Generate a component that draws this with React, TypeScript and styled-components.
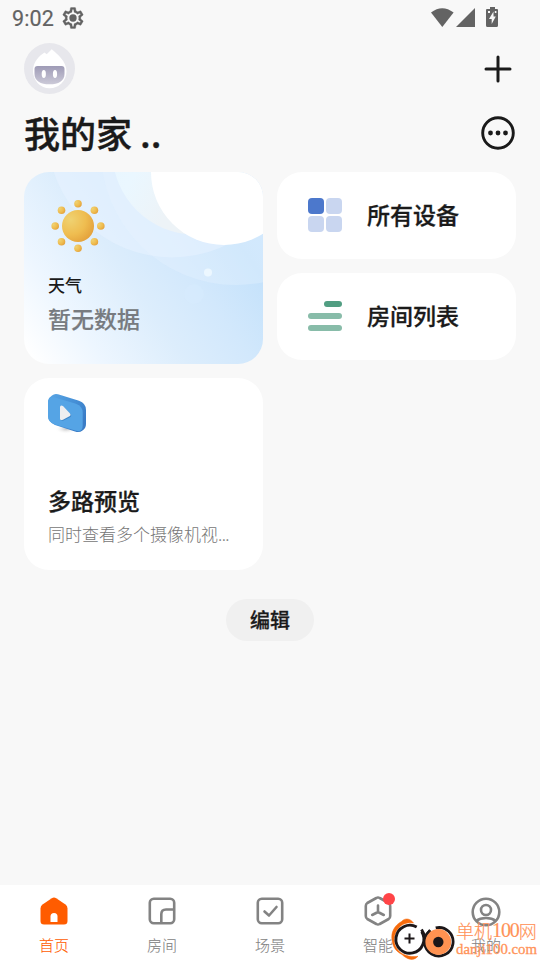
import React from 'react';
import styled, { createGlobalStyle } from 'styled-components';

const GlobalStyle = createGlobalStyle`
  * { box-sizing: border-box; }
  html, body { margin: 0; padding: 0; background: #f8f8f8; }
  body { font-family: Roboto, "Noto Sans CJK SC", sans-serif; color: #1a1a1a; overflow: hidden; }
  svg { display: block; flex: none; }
`;

const Screen = styled.div`
  width: 540px;
  height: 960px;
  display: flex;
  flex-direction: column;
  background: #f8f8f8;
  overflow: hidden;
`;

const StatusBar = styled.header`
  height: 36px;
  flex: none;
  padding: 0 41px 0 12px;
  display: flex;
  align-items: center;
  justify-content: space-between;
  color: #636363;
`;

const StatusGroup = styled.div<{ $gap: number }>`
  display: flex;
  align-items: center;
  gap: ${p => p.$gap}px;
`;

const Clock = styled.span`
  font-size: 21.5px;
  line-height: 36px;
  letter-spacing: 0.15px;
  padding-top: 1px;
  height: 36px;
  -webkit-text-stroke: 0.2px;
`;

const TopRow = styled.div`
  height: 65px;
  flex: none;
  display: flex;
  align-items: center;
  justify-content: space-between;
  padding: 0 28px 0 24px;
`;

const TitleRow = styled.div`
  height: 63px;
  flex: none;
  display: flex;
  align-items: center;
  justify-content: space-between;
  padding: 1px 25px 0 24px;
`;

const Title = styled.h1`
  margin: 0;
  padding-bottom: 3px;
  font: 500 36px/58px "Noto Sans CJK SC", sans-serif;
  -webkit-text-stroke: 0.4px;
`;

const Content = styled.main`
  flex: 1;
  display: flex;
  flex-direction: column;
  align-items: center;
  padding: 8px 24px 0;
`;

const Grid = styled.div`
  width: 100%;
  display: grid;
  grid-template-columns: 239px 239px;
  grid-template-rows: 192px 192px;
  gap: 14px;
`;

const Column = styled.div`
  display: flex;
  flex-direction: column;
  gap: 14px;
`;

const Card = styled.section`
  border-radius: 25px;
  background: #fff;
  overflow: hidden;
`;

const WeatherCard = styled(Card)`
  position: relative;
  background: linear-gradient(55deg, #ffffff 3%, #edf6ff 22%, #dcedfc 44%, #d2e8fc 62%, #c5e2fb 80%, #cbe4fe 100%);
`;

const Backdrop = styled.svg`
  position: absolute;
  inset: 0;
`;

const CardBody = styled.div<{ $top: number }>`
  position: relative;
  display: flex;
  flex-direction: column;
  align-items: flex-start;
  padding: ${p => p.$top}px 24px 0;
`;

const SunSlot = styled.div`
  margin-left: 3px;
`;

const WeatherLabel = styled.div`
  margin-top: 20px;
  font: 500 17px/24px "Noto Sans CJK SC", sans-serif;
`;

const CardTitle = styled.div<{ $muted?: boolean; $top?: number }>`
  font: 500 23px/34px "Noto Sans CJK SC", sans-serif;
  -webkit-text-stroke: ${p => (p.$muted ? 0.15 : 0.3)}px;
  margin-top: ${p => p.$top ?? 0}px;
  color: ${p => (p.$muted ? '#777b80' : '#1a1a1a')};
`;

const Description = styled.div`
  width: 182px;
  margin-top: 4px;
  font: 300 17px/26px "Noto Sans CJK SC", sans-serif;
  color: #767676;
  white-space: nowrap;
`;

const Ellipsis = styled.span`
  letter-spacing: -0.6px;
`;

const ShortcutCard = styled(Card)`
  height: 87px;
  display: flex;
  align-items: center;
  gap: 25px;
  padding: 0 0 2px 31px;
`;

const ShortcutLabel = styled(CardTitle)`
  padding-bottom: 2px;
`;

const EditButton = styled.button`
  margin-top: 29px;
  width: 88px;
  height: 42px;
  padding: 0;
  border: 0;
  border-radius: 21px;
  background: #f0f0f0;
  color: #1a1a1a;
  font: 500 20px/40px "Noto Sans CJK SC", sans-serif;
  -webkit-text-stroke: 0.3px;
`;

const NavBar = styled.nav`
  position: relative;
  height: 75px;
  flex: none;
  display: grid;
  grid-template-columns: repeat(5, 1fr);
  background: #fff;
`;

const NavItem = styled.div<{ $active?: boolean }>`
  position: relative;
  display: flex;
  flex-direction: column;
  align-items: center;
  padding-top: 10px;
  color: ${p => (p.$active ? '#ff5c00' : '#838383')};
`;

const NavLabel = styled.span`
  margin-top: 7px;
  font: 300 15px/22px "Noto Sans CJK SC", sans-serif;
  -webkit-text-stroke: 0.1px;
`;

const Dot = styled.i`
  position: absolute;
  left: 59px;
  top: 8px;
  width: 12px;
  height: 12px;
  border-radius: 50%;
  background: #ff4447;
`;

const Watermark = styled.div`
  position: absolute;
  right: 0;
  bottom: 0;
  width: 152px;
  height: 44px;
  display: flex;
  color: #ff9358;
`;

const WatermarkText = styled.div`
  display: flex;
  flex-direction: column;
  margin-left: 1px;
  white-space: nowrap;
`;

const SiteName = styled.span`
  display: flex;
  height: 25px;
  font: 300 18px/29px "Noto Sans CJK SC", serif;
  -webkit-text-stroke: 0.15px;
`;

const SiteNumber = styled.span`
  font: 400 20px/29px "Liberation Serif", serif;
  letter-spacing: -1.1px;
`;

const SiteUrl = styled.span`
  font: 400 14.8px/16px "Liberation Serif", serif;
  height: 16px;
  -webkit-text-stroke: 0.3px;
`;

const GearIcon = () => (
  <svg width="22" height="22" viewBox="1.500 1.500 21 21" fill="currentColor">
    <path d="M19.43 12.98c.04-.32.07-.64.07-.98s-.03-.66-.07-.98l2.11-1.65a.5.5 0 0 0 .12-.64l-2-3.46a.5.5 0 0 0-.61-.22l-2.49 1a7.3 7.3 0 0 0-1.69-.98l-.38-2.65A.49.49 0 0 0 14 2h-4a.49.49 0 0 0-.49.42l-.38 2.65c-.61.25-1.17.59-1.69.98l-2.49-1a.5.5 0 0 0-.61.22l-2 3.46a.49.49 0 0 0 .12.64l2.11 1.65c-.04.32-.07.65-.07.98s.03.66.07.98l-2.11 1.65a.5.5 0 0 0-.12.64l2 3.46c.12.22.39.3.61.22l2.49-1c.52.4 1.08.73 1.69.98l.38 2.65c.03.24.24.42.49.42h4c.25 0 .46-.18.49-.42l.38-2.65a7.7 7.7 0 0 0 1.69-.98l2.49 1c.23.09.49 0 .61-.22l2-3.46a.5.5 0 0 0-.12-.64zm-1.98-1.71c.04.31.05.52.05.73s-.02.43-.05.73l-.14 1.13.89.7 1.08.84-.7 1.21-1.27-.51-1.04-.42-.9.68c-.43.32-.84.56-1.25.73l-1.06.43-.16 1.13-.2 1.35h-1.400l-.19-1.350-.16-1.130-1.060-.43c-.43-.18-.83-.41-1.230-.71l-.91-.7-1.060.43-1.270.51-.7-1.210 1.080-.84.89-.7-.14-1.130A8 8 0 0 1 6.500 12c0-.2.020-.43.050-.73l.14-1.130-.89-.7-1.080-.84.7-1.210 1.270.51 1.040.42.9-.68c.43-.32.84-.56 1.250-.73l1.060-.43.16-1.130.2-1.350h1.390l.19 1.350.16 1.130 1.060.43c.43.18.83.41 1.230.71l.91.7 1.060-.43 1.270-.51.7 1.210-1.070.85-.89.7z" stroke="currentColor" strokeWidth=".3" />
    <circle cx="12" cy="12" r="3.500" />
  </svg>
);

const SignalIcons = () => (
  <svg width="68" height="22" viewBox="0 0 68 22" fill="#636363">
    <path d="M0 5.500Q11.200-3 22.600 5.500L11.300 20z" />
    <path d="M44 1V20H25z" />
    <path fillRule="evenodd" d="M59 0h5v2h2q1 0 1 1v15.500q0 1.500-1.500 1.500h-9Q55 20 55 18.500V3q0-1 1-1h3zM62.500 4.500 58 12h2.700v5L64.800 9.500h-2.300zM57 4v2h2V4zM63.800 4v2h1.600V4z" />
  </svg>
);

const Avatar = () => (
  <svg width="51" height="51" viewBox="0 0 51 51">
    <defs>
      <linearGradient id="mask" x1="0" y1="0" x2="0" y2="1">
        <stop offset="0" stopColor="#9e9bb6" />
        <stop offset="1" stopColor="#cccad8" />
      </linearGradient>
    </defs>
    <circle cx="25.500" cy="25.500" r="25.500" fill="#e7e7ec" />
    <path d="M9 28C9 19 15 13 20.500 9.500l2.200 1.700 5-4.900C33 11 42.500 18 42.500 28.500A16.700 17 0 0 1 9 28z" fill="#fff" />
    <path d="M13.500 23h24q3 0 3 3v5c0 7-6 10.300-15 10.300s-15-3.300-15-10.300v-5q0-3 3-3z" fill="url(#mask)" />
    <ellipse cx="19.800" cy="31" rx="2.100" ry="4" fill="#fff" />
    <ellipse cx="31" cy="31" rx="2.100" ry="4" fill="#fff" />
  </svg>
);

const PlusIcon = () => (
  <svg width="28" height="28" viewBox="0 0 28 28" stroke="#1a1a1a" strokeWidth="3" strokeLinecap="round">
    <path d="M14 2v24M2 14h24" />
  </svg>
);

const MoreIcon = () => (
  <svg width="34" height="34" viewBox="0 0 34 34" fill="#1a1a1a">
    <circle cx="17" cy="17" r="15.300" fill="none" stroke="#1a1a1a" strokeWidth="2.900" />
    <circle cx="9.500" cy="17" r="2.400" />
    <circle cx="17" cy="17" r="2.400" />
    <circle cx="24.500" cy="17" r="2.400" />
  </svg>
);

const WeatherBackdrop = () => (
  <Backdrop width="239" height="192" viewBox="0 0 239 192">
    <defs>
      <linearGradient id="halo" x1="0" y1="0.300" x2="0.700" y2="0.700">
        <stop offset="0" stopColor="#e8f6ff" />
        <stop offset="0.350" stopColor="#eaf7ff" />
        <stop offset="0.700" stopColor="#edf3f7" />
      </linearGradient>
    </defs>
    <circle cx="148" cy="-39" r="124.500" fill="#e9f4ff" fillOpacity=".5" />
    <circle cx="212" cy="-22" r="135" fill="#e9f4ff" fillOpacity=".35" />
    <circle cx="171" cy="-20" r="82.500" fill="url(#halo)" />
    <circle cx="200" cy="0" r="73" fill="#fff" />
    <circle cx="184" cy="100.500" r="4" fill="#ecf7ff" />
    <circle cx="170" cy="122" r="10" fill="#dceefe" fillOpacity=".25" />
  </Backdrop>
);

const rays = [[27, 4.7], [43.4, 11.2], [49.8, 27], [43.4, 42.7], [27, 49.3], [10.5, 42.7], [4.2, 27], [10.5, 11.2]];

const SunIcon = () => (
  <svg width="54" height="54" viewBox="0 0 54 54">
    <defs>
      <radialGradient id="sun" cx=".27" cy=".3" r=".85">
        <stop offset="0" stopColor="#efd272" />
        <stop offset=".55" stopColor="#efbd50" />
        <stop offset="1" stopColor="#e29d38" />
      </radialGradient>
    </defs>
    <circle cx="27" cy="27" r="16" fill="url(#sun)" />
    {rays.map(([x, y], i) => <circle key={i} cx={x} cy={y} r="3.800" fill="url(#sun)" />)}
  </svg>
);

const DevicesIcon = () => (
  <svg width="34" height="34" viewBox="0 0 34 34" fill="#c9d6f0">
    <rect width="16" height="16" rx="4" fill="#4c78cc" />
    <rect x="18" width="16" height="16" rx="4" />
    <rect y="18" width="16" height="16" rx="4" />
    <rect x="18" y="18" width="16" height="16" rx="4" />
  </svg>
);

const RoomsIcon = () => (
  <svg width="34" height="30" viewBox="0 0 34 30" fill="#88bca9">
    <rect x="16" width="18" height="6" rx="3" fill="#519e82" />
    <rect y="12" width="34" height="6" rx="3" />
    <rect y="24" width="34" height="6" rx="3" />
  </svg>
);

const VideoIcon = () => (
  <svg width="38" height="42" viewBox="0 0 38 42">
    <defs>
      <radialGradient id="shade">
        <stop offset="0" stopColor="#c6c6c6" />
        <stop offset="1" stopColor="#fff" stopOpacity="0" />
      </radialGradient>
      <linearGradient id="edge" x1="0" y1="0" x2="1" y2="0.600">
        <stop offset="0" stopColor="#59a5e4" />
        <stop offset="0.600" stopColor="#4590d7" />
        <stop offset="1" stopColor="#3a7cc6" />
      </linearGradient>
    </defs>
    <ellipse cx="18" cy="36" rx="11" ry="5" fill="url(#shade)" />
    <path d="M0 8Q1 4 4 2.500 6.500.3 10 1.300L31 7.800Q38 10.300 38 17V31q0 4-3.500 6.500-3 2.500-7.500 1L7 32Q0 29 0 23z" fill="url(#edge)" />
    <path d="M0 9Q.5 3 7 4.500L28 10.700q6.700 2.300 6.700 9V32.500q0 7-6.700 5.300L7 31.500Q0 29 0 23z" fill="#55a4e5" />
    <path d="M13.500 15.500 22.500 21q1.500 2 0 3l-7 3.500q-2 .5-3-1z" fill="#3d84c7" />
    <path d="M12 14.500q0-3 3-1.500l7 7.500q1.500 2-1 3l-6 3.200q-3 1-3-1z" fill="#eeeef0" />
  </svg>
);

const HomeIcon = () => (
  <svg width="32" height="32" viewBox="0 0 32 32">
    <path d="M13.800 3.200q2.200-1.400 4.400 0L27.500 9.500q2 1.500 2 4V26q0 3.500-3.500 3.500H6Q2.500 29.500 2.500 26V13.500q0-2.500 2-4z" fill="currentColor" />
    <path d="M12.500 27v-5.500a3.500 3.500 0 0 1 7 0V27z" fill="#fff" />
  </svg>
);

const RoomIcon = () => (
  <svg width="32" height="32" viewBox="0 0 32 32" fill="none" stroke="currentColor" strokeWidth="2.600">
    <rect x="3.800" y="3.800" width="24.400" height="24.400" rx="4" />
    <path d="M28 14.500h-8q-4.700 0-4.700 4.700V28" />
  </svg>
);

const SceneIcon = () => (
  <svg width="32" height="32" viewBox="0 0 32 32" fill="none" stroke="currentColor" strokeWidth="2.600">
    <rect x="3.800" y="3.800" width="24.400" height="24.400" rx="4" />
    <path d="m10.500 16.500 4.500 4 7.500-8.500" strokeLinecap="round" strokeLinejoin="round" />
  </svg>
);

const SmartIcon = () => (
  <svg width="32" height="32" viewBox="0 0 32 32" fill="none" stroke="currentColor" strokeWidth="2.600" strokeLinejoin="round" strokeLinecap="round">
    <path d="M14.300 3q1.700-1 3.400 0l9 5Q28.200 9 28.200 11v10q0 2-1.500 3l-9 5q-1.700 1-3.400 0l-9-5q-1.500-1-1.500-3V11q0-2 1.500-3z" />
    <path d="M16 10.500V17l-5.800 3M16 17l5.800 3" />
  </svg>
);

const UserIcon = () => (
  <svg width="32" height="32" viewBox="0 0 32 32" fill="none" stroke="currentColor" strokeWidth="2.600">
    <circle cx="16" cy="17" r="13.300" />
    <circle cx="16" cy="15" r="5" />
    <path d="M6 26q4-3 10-3t10 3" />
  </svg>
);

const WatermarkLogo = () => (
  <svg width="67" height="44" viewBox="0 0 67 44" fill="none">
    <circle cx="21.500" cy="23" r="16.500" fill="#fff" />
    <path d="M25.500 7C22 1.800 16.500 2 13.500 5.500 6.500 9.500 3.500 15.500 3.800 22c.5 8.500 4 13.500 10.200 16.500 3.500 3.500 10.500 8 16 1.800C23 41.500 11 39.500 7.200 29.500 4 20 9 11.500 15.500 8.200q4-2.300 10-1.200z" fill="#f66b0c" stroke="#f66b0c" strokeWidth="0.500" />
    <circle cx="50.300" cy="26" r="16.500" fill="#fff" />
    <path d="M28.700 11A14 14 0 1 0 33.700 15.700" stroke="#1c1719" strokeWidth="2.900" />
    <path d="M21.500 17.500v10M16.500 22.500h10" stroke="#1c1719" strokeWidth="2" />
    <path d="M47.700 11.900A14.200 14.200 0 1 1 42.200 14.500" stroke="#1c1719" strokeWidth="2.800" />
    <path d="m33.500 13.500 3.700 7 5-6.300" stroke="#1c1719" strokeWidth="2.800" />
    <circle cx="50.300" cy="26" r="12.900" fill="#ff9251" />
    <circle cx="50.300" cy="26" r="5.200" fill="#1c1719" />
  </svg>
);

const tabs = [
  { label: '首页', Icon: HomeIcon, active: true },
  { label: '房间', Icon: RoomIcon },
  { label: '场景', Icon: SceneIcon },
  { label: '智能', Icon: SmartIcon, dot: true },
  { label: '我的', Icon: UserIcon },
];

export default function App() {
  return (
    <>
      <GlobalStyle />
      <Screen>
        <StatusBar>
          <StatusGroup $gap={8}><Clock>9:02</Clock><GearIcon /></StatusGroup>
          <SignalIcons />
        </StatusBar>
        <TopRow><Avatar /><PlusIcon /></TopRow>
        <TitleRow><Title>我的家 ..</Title><MoreIcon /></TitleRow>
        <Content>
          <Grid>
            <WeatherCard>
              <WeatherBackdrop />
              <CardBody $top={27}>
                <SunSlot><SunIcon /></SunSlot>
                <WeatherLabel>天气</WeatherLabel>
                <CardTitle $muted $top={4}>暂无数据</CardTitle>
              </CardBody>
            </WeatherCard>
            <Column>
              <ShortcutCard><DevicesIcon /><ShortcutLabel>所有设备</ShortcutLabel></ShortcutCard>
              <ShortcutCard><RoomsIcon /><ShortcutLabel>房间列表</ShortcutLabel></ShortcutCard>
            </Column>
            <Card>
              <CardBody $top={15}>
                <VideoIcon />
                <CardTitle $top={48}>多路预览</CardTitle>
                <Description>同时查看多个摄像机视<Ellipsis>...</Ellipsis></Description>
              </CardBody>
            </Card>
          </Grid>
          <EditButton>编辑</EditButton>
        </Content>
        <NavBar>
          {tabs.map(({ label, Icon, active, dot }) => (
            <NavItem key={label} $active={active}>
              <Icon />
              {dot && <Dot />}
              <NavLabel>{label}</NavLabel>
            </NavItem>
          ))}
          <Watermark>
            <WatermarkLogo />
            <WatermarkText>
              <SiteName>单机<SiteNumber>100</SiteNumber>网</SiteName>
              <SiteUrl>danji100.com</SiteUrl>
            </WatermarkText>
          </Watermark>
        </NavBar>
      </Screen>
    </>
  );
}
